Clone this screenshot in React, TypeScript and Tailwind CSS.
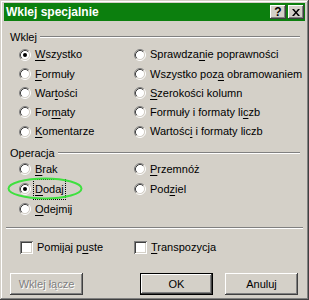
import type { ReactNode } from 'react'

const FONT = "font-['Liberation_Sans',Arial,sans-serif]"

function Radio({ checked = false }: { checked?: boolean }) {
  return (
    <svg width="12" height="12" viewBox="0 0 12 12" className="shrink-0">
      <circle cx="6" cy="6" r="4.5" fill="#ffffff" />
      <path d="M2.11 9.89 A5.5 5.5 0 0 1 9.89 2.11" fill="none" stroke="#808080" />
      <path d="M9.89 2.11 A5.5 5.5 0 0 1 2.11 9.89" fill="none" stroke="#ffffff" />
      <path d="M2.82 9.18 A4.5 4.5 0 0 1 9.18 2.82" fill="none" stroke="#404040" />
      <path d="M9.18 2.82 A4.5 4.5 0 0 1 2.82 9.18" fill="none" stroke="#d4d0c8" />
      {checked && <circle cx="6" cy="6" r="2" fill="#000000" />}
    </svg>
  )
}

function Checkbox() {
  return (
    <span className="block h-[13px] w-[13px] shrink-0 bg-white shadow-[inset_1px_1px_#808080,inset_-1px_-1px_#ffffff,inset_2px_2px_#404040,inset_-2px_-2px_#d4d0c8]" />
  )
}

// text with one underlined accelerator letter
function Label({ pre = '', acc, post = '' }: { pre?: string; acc: string; post?: string }) {
  return (
    <span className="whitespace-nowrap">
      {pre}
      <span className="underline underline-offset-[2px]">{acc}</span>
      {post}
    </span>
  )
}

function Option({ checked, focus, children }: { checked?: boolean; focus?: boolean; children: ReactNode }) {
  return (
    <div className="flex items-center gap-[4px]">
      <Radio checked={checked} />
      <span className={focus ? 'outline outline-1 outline-dotted outline-black outline-offset-[1px]' : ''}>{children}</span>
    </div>
  )
}

function GroupLabel({ text }: { text: string }) {
  return (
    <div className="ml-[6px] mr-[5px] flex h-[12px] items-center">
      <span className="pr-[3px] leading-[12px]">{text}</span>
      <div className="h-[2px] flex-1 border-t border-b border-t-[#808080] border-b-white" />
    </div>
  )
}

function Button({ children, primary, disabled }: { children: ReactNode; primary?: boolean; disabled?: boolean }) {
  return (
    <div
      className={
        'flex h-[22px] w-[73px] items-center justify-center bg-[#d4d0c8] ' +
        (primary
          ? 'border border-black shadow-[inset_-1px_-1px_#404040,inset_1px_1px_#ffffff,inset_-2px_-2px_#808080]'
          : 'shadow-[inset_-1px_-1px_#404040,inset_1px_1px_#ffffff,inset_-2px_-2px_#808080]') +
        (disabled ? ' text-[#808080] [text-shadow:1px_1px_#ffffff]' : '')
      }
    >
      {children}
    </div>
  )
}

export default function App() {
  return (
    <div
      className={`${FONT} relative h-[300px] w-[309px] bg-[#d4d0c8] px-[4px] pt-[3px] text-[11px] text-black shadow-[inset_-1px_-1px_#404040,inset_1px_1px_#d4d0c8,inset_-2px_-2px_#808080,inset_2px_2px_#ffffff]`}
    >
      {/* title bar */}
      <div className="flex h-[18px] items-center justify-between bg-[#0c7f0e] pl-[2px] pr-[1px]">
        <span className="text-[12px] font-bold text-white">Wklej specjalnie</span>
        <div className="flex gap-[2px]">
          <div className="flex h-[14px] w-[16px] items-center justify-center bg-[#d4d0c8] text-[12px] font-bold leading-none shadow-[inset_-1px_-1px_#404040,inset_1px_1px_#ffffff,inset_-2px_-2px_#808080]">
            ?
          </div>
          <div className="flex h-[14px] w-[16px] items-center justify-center bg-[#d4d0c8] shadow-[inset_-1px_-1px_#404040,inset_1px_1px_#ffffff,inset_-2px_-2px_#808080]">
            <svg width="8" height="7" viewBox="0 0 8 7">
              <path d="M0 0h2l2 2.5L6 0h2L5 3.5 8 7H6L4 4.5 2 7H0l3-3.5z" fill="#000" />
            </svg>
          </div>
        </div>
      </div>

      {/* Wklej group */}
      <div className="mt-[10px]">
        <GroupLabel text="Wklej" />
        <div className="mt-[2px] ml-[15px] grid grid-cols-[115px_1fr] grid-rows-[repeat(5,19.25px)] grid-flow-col items-center">
          <Option checked>
            <Label acc="W" post="szystko" />
          </Option>
          <Option>
            <Label acc="F" post="ormuły" />
          </Option>
          <Option>
            <Label pre="War" acc="t" post="ości" />
          </Option>
          <Option>
            <Label pre="For" acc="m" post="aty" />
          </Option>
          <Option>
            <Label acc="K" post="omentarze" />
          </Option>
          <Option>
            <Label pre="Sprawdza" acc="n" post="ie poprawności" />
          </Option>
          <Option>
            <Label pre="Wszystko poz" acc="a" post=" obramowaniem" />
          </Option>
          <Option>
            <Label acc="S" post="zerokości kolumn" />
          </Option>
          <Option>
            <Label pre="Formuły i formaty li" acc="c" post="zb" />
          </Option>
          <Option>
            <Label pre="Wartośc" acc="i" post=" i formaty liczb" />
          </Option>
        </div>
      </div>

      {/* Operacja group */}
      <div className="mt-[6px]">
        <GroupLabel text="Operacja" />
        <div className="ml-[15px] grid grid-cols-[115px_1fr] grid-rows-[repeat(3,20px)] grid-flow-col items-center">
          <Option>
            <Label acc="B" post="rak" />
          </Option>
          <Option checked focus>
            <Label acc="D" post="odaj" />
          </Option>
          <Option>
            <Label acc="O" post="dejmij" />
          </Option>
          <Option>
            <Label acc="P" post="rzemnóż" />
          </Option>
          <Option>
            <Label pre="Pod" acc="z" post="iel" />
          </Option>
        </div>
      </div>

      <div className="mt-[8px] mx-[2px] h-[2px] border-t border-b border-t-[#808080] border-b-white" />

      {/* checkboxes */}
      <div className="mt-[10px] ml-[16px] grid grid-cols-[114px_1fr] items-center">
        <div className="flex items-center gap-[4px]">
          <Checkbox />
          <Label pre="Pomijaj p" acc="u" post="ste" />
        </div>
        <div className="flex items-center gap-[4px]">
          <Checkbox />
          <Label acc="T" post="ranspozycja" />
        </div>
      </div>

      {/* buttons */}
      <div className="mt-[17px] ml-[6px] flex">
        <Button disabled>Wklej łącze</Button>
        <div className="ml-[57px]">
          <Button primary>OK</Button>
        </div>
        <div className="ml-[12px]">
          <Button>Anuluj</Button>
        </div>
      </div>

      {/* green highlight ellipse drawn over the dialog */}
      <svg className="pointer-events-none absolute left-[7px] top-[177px]" width="76" height="23" viewBox="0 0 76 23">
        <ellipse cx="38" cy="11.5" rx="36.5" ry="10" fill="none" stroke="#3ee03e" strokeWidth="2" />
      </svg>
    </div>
  )
}
